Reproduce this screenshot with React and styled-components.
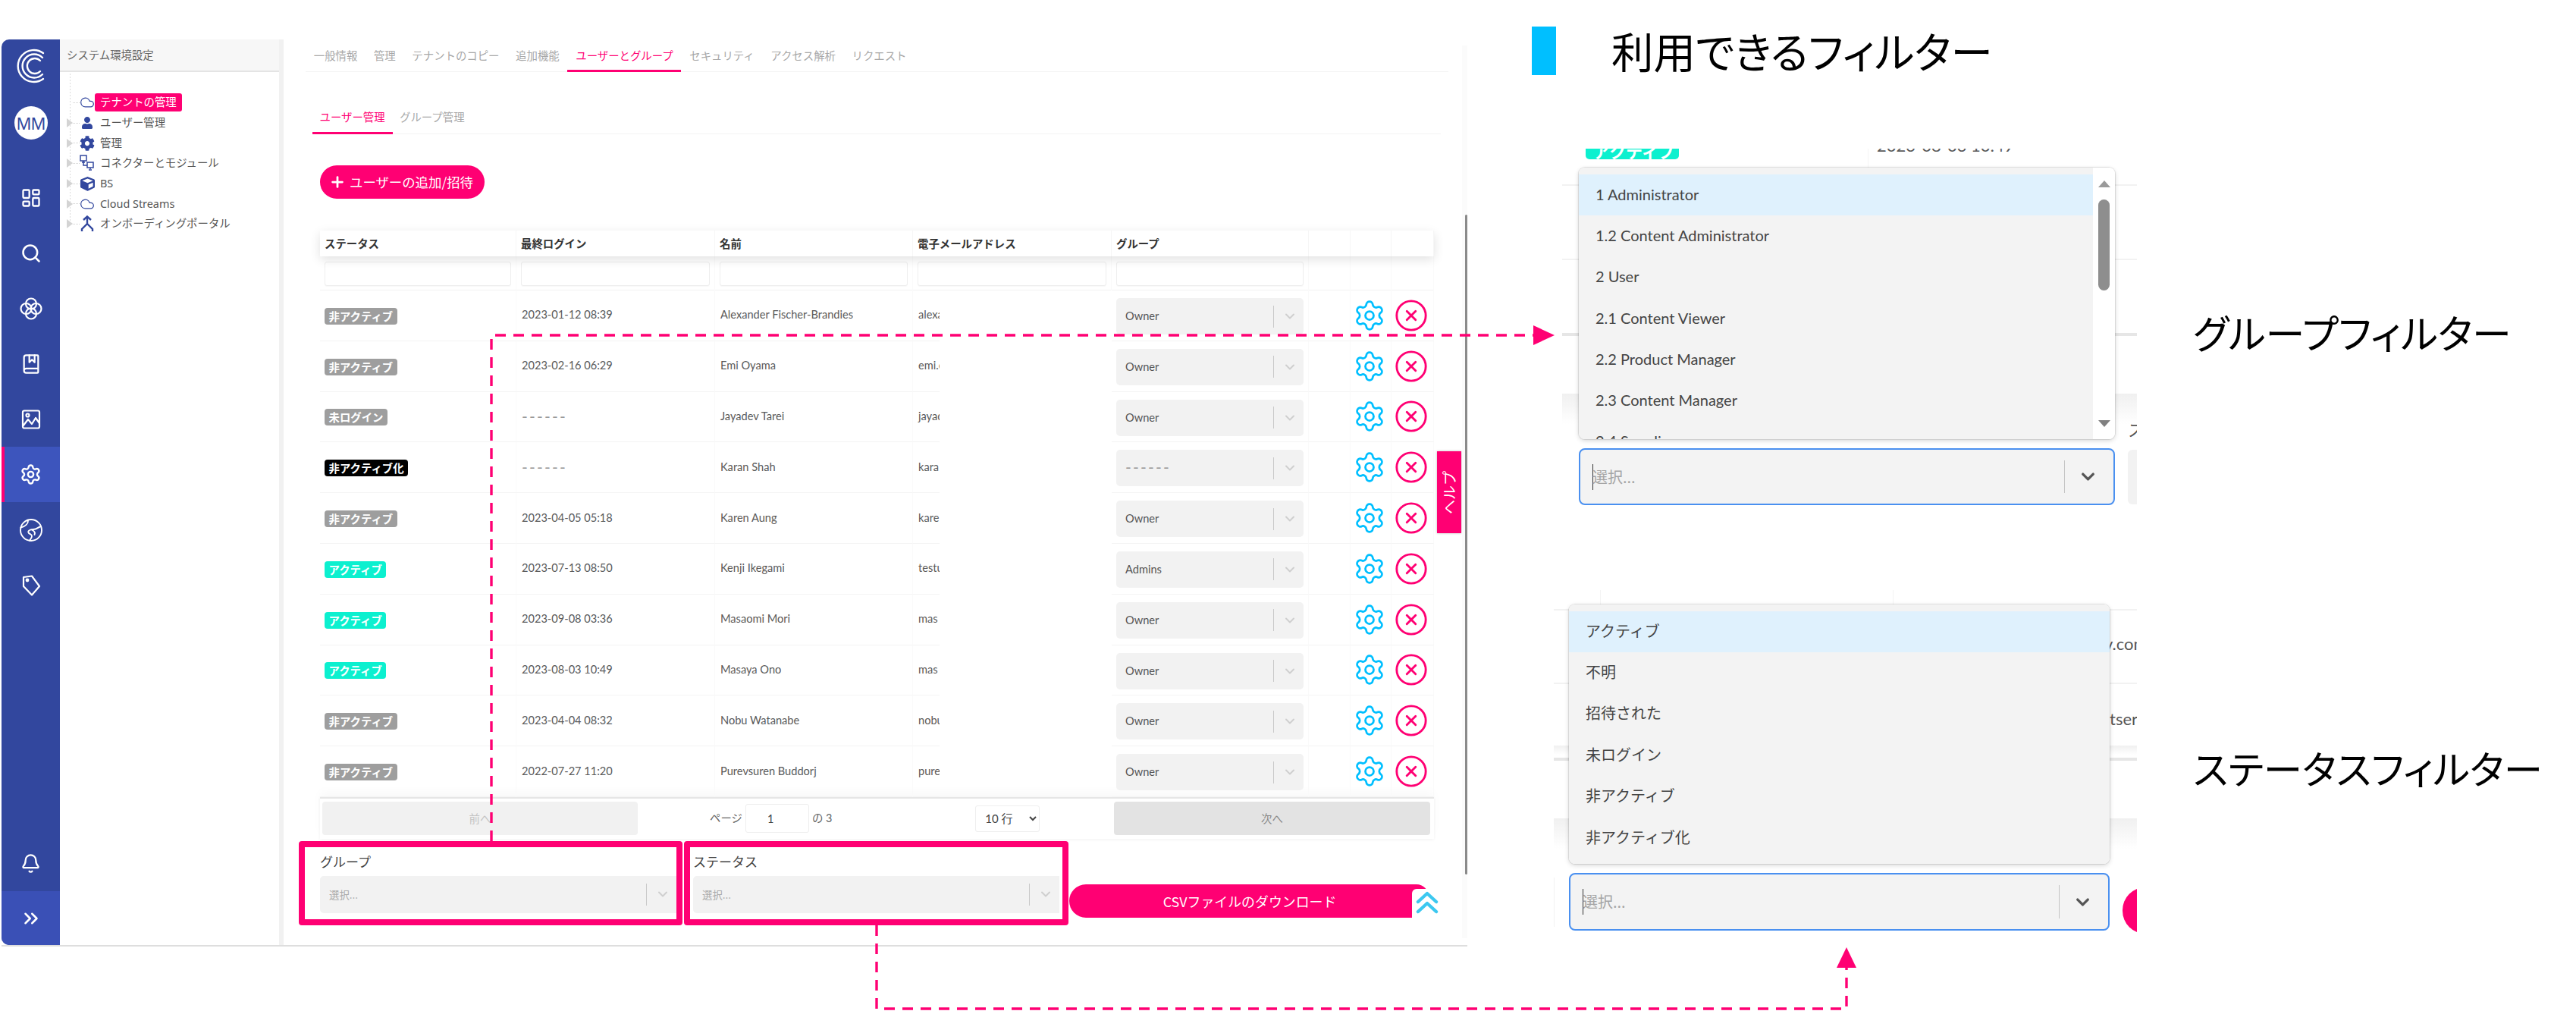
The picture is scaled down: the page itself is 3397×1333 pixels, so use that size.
import React from 'react';
import styled, { createGlobalStyle } from 'styled-components';
import { LayoutDashboard, Search, BookMarked, Settings, Bell, ChevronsRight, ChevronDown, CircleX, Cloud, Plus } from 'lucide-react';
import { FaUser, FaCog, FaCube } from 'react-icons/fa';

const PINK = '#ff0073';
const NAVY = '#32479e';
const CJK = '"Noto Sans CJK JP", sans-serif';
const UI = `Lato, ${CJK}`;

const Global = createGlobalStyle`
  html, body { margin: 0; padding: 0; background: #fff; overflow: hidden; }
  body { font-family: ${UI}; color: #444; }
  * { box-sizing: border-box; }
`;

const Page = styled.div`
  position: relative;
  width: 3397px;
  height: 1333px;
  display: flex;
  overflow: hidden;
  background: #fff;
`;

const AppWindow = styled.div`
  margin: 52px 0 0 2px;
  width: 1933px;
  height: 1196px;
  display: flex;
  border-bottom: 2px solid #dedede;
`;

const Nav = styled.nav`
  width: 77px;
  flex: none;
  background: ${NAVY};
  border-radius: 10px 0 0 10px;
  display: flex;
  flex-direction: column;
  align-items: stretch;
  overflow: hidden;
  color: #fff;
`;
const LogoBox = styled.div`
  height: 63px;
  padding-top: 12px;
  display: flex;
  justify-content: center;
`;
const Avatar = styled.div`
  width: 44px;
  height: 44px;
  margin: 25px auto 40px;
  border-radius: 50%;
  background: #fff;
  color: ${NAVY};
  font: 400 22px/44px "Noto Sans", sans-serif;
  letter-spacing: -1px;
  text-align: center;
`;
const NavItem = styled.div`
  height: 73px;
  display: flex;
  align-items: center;
  justify-content: center;
  background: ${p => (p.$active ? '#3d55bd' : 'transparent')};
  border-left: 4px solid ${p => (p.$active ? PINK : 'transparent')};
  padding-right: 4px;
`;
const NavSpacer = styled.div`flex: 1;`;
const ExpandItem = styled.div`
  height: 71px;
  background: #3a50b6;
  display: flex;
  align-items: center;
  justify-content: center;
`;

const Tree = styled.aside`
  width: 295px;
  flex: none;
  border-right: 6px solid #f1f1f1;
  display: flex;
  flex-direction: column;
`;
const TreeHead = styled.div`
  height: 43px;
  background: #f7f7f7;
  border-bottom: 2px solid #e4e4e4;
  padding-left: 9px;
  font: 400 14.4px/41px "Noto Sans", ${CJK};
  color: #666;
`;
const TreeBody = styled.div`
  padding: 27px 0 0 9px;
  background-image: repeating-linear-gradient(#dcdcdc 0 2px, transparent 2px 4px);
  background-repeat: no-repeat;
  background-position: 13px 2px;
  background-size: 1px 199px;
`;
const TreeRow = styled.div`
  height: 26.7px;
  display: flex;
  align-items: center;
  font: 400 14.4px/26px "Noto Sans", ${CJK};
  color: #555;
`;
const Caret = styled.span`
  width: 0;
  height: 0;
  flex: none;
  border-left: 8px solid ${p => (p.$hidden ? 'transparent' : '#d4d4d4')};
  border-top: 6px solid transparent;
  border-bottom: 6px solid transparent;
`;
const Dots = styled.span`
  width: 9px;
  flex: none;
  border-top: 1px dotted #d0d0d0;
`;
const TreeIcon = styled.span`
  width: 20px;
  height: 22px;
  flex: none;
  margin-right: ${p => (p.$tight ? 0 : 7)}px;
  display: flex;
  align-items: center;
  justify-content: center;
  color: ${NAVY};
`;
const TenantLabel = styled.span`
  height: 24px;
  padding: 0 7px;
  background: ${PINK};
  color: #fff;
  border-radius: 3px;
  line-height: 23px;
`;

const Main = styled.main`
  width: 1561px;
  flex: none;
  display: flex;
  flex-direction: column;
  position: relative;
`;
const Tabs = styled.div`
  margin-left: 29px;
  margin-right: 25px;
  height: 43px;
  display: flex;
  border-bottom: 1px solid #f3f3f3;
`;
const Tab = styled.div`
  height: 43px;
  padding: 0 10.8px;
  font: 400 14.4px/41px ${CJK};
  color: ${p => (p.$active ? PINK : '#a8a8a8')};
  border-bottom: 3px solid ${p => (p.$active ? PINK : 'transparent')};
`;
const SubTabs = styled.div`
  margin: 41px 35px 0 38px;
  height: 41px;
  display: flex;
  border-bottom: 1px solid #f3f3f3;
`;
const SubTab = styled.div`
  height: 41px;
  padding: 0 10px 0 9.5px;
  font: 400 14.4px/36px ${CJK};
  color: ${p => (p.$active ? PINK : '#a8a8a8')};
  border-bottom: 3px solid ${p => (p.$active ? PINK : 'transparent')};
`;
const AddButton = styled.button`
  margin: 41px 0 0 48px;
  width: 217px;
  height: 44px;
  border: 0;
  border-radius: 22px;
  background: ${PINK};
  color: #fff;
  padding: 0 0 0 12px;
  display: flex;
  align-items: center;
  gap: 5px;
  font: 400 17.4px/44px ${CJK};
  white-space: nowrap;
`;

const COLS = '259px 262px 261px 262px 260px 55px 54px 56px';
const Table = styled.div`
  margin: 42px 0 0 48px;
  width: 1469px;
`;
const HeadRow = styled.div`
  display: grid;
  grid-template-columns: ${COLS};
  height: 34px;
  background: #fff;
  box-shadow: 0 4px 14px rgba(0, 0, 0, 0.12);
  position: relative;
`;
const HeadCell = styled.div`
  padding-left: 6px;
  font: 700 14.4px/33px ${CJK};
  color: #333;
  border-right: 1px solid #f6f6f6;
`;
const FilterRow = styled.div`
  display: grid;
  grid-template-columns: ${COLS};
  height: 45px;
  border-bottom: 1px solid #f2f2f2;
`;
const FilterCell = styled.div`
  padding: 7px 6px 6px;
  border-right: 1px solid #fafafa;
`;
const FilterInput = styled.input`
  display: block;
  width: 100%;
  height: 32px;
  border: 1px solid #eee;
  border-radius: 3px;
  background: #fff;
  box-shadow: 0 1px 1px rgba(0, 0, 0, 0.03);
`;
const Row = styled.div`
  display: grid;
  grid-template-columns: ${COLS};
  height: 66.8px;
`;
const Cell = styled.div`
  padding: 0 0 1px 7px;
  display: flex;
  align-items: center;
  font: 400 14.6px/20px ${UI};
  color: #5a5a5a;
  border-right: 1px solid #fafafa;
  border-bottom: 1.5px solid #f4f4f4;
  white-space: nowrap;
  overflow: hidden;
`;
const DashText = styled.span`
  font: 400 21px/20px ${UI};
  letter-spacing: 2.2px;
  color: #9a9a9a;
`;
const StatusCell = styled(Cell)`
  padding: 2px 0 0 6px;
`;
const EmailCell = styled.div`
  display: block;
`;
const EmailClip = styled.div`
  width: 35px;
  height: 100%;
  padding: 0 0 1px 7px;
  display: flex;
  align-items: center;
  font: 400 14.6px/20px ${UI};
  color: #5a5a5a;
  overflow: hidden;
  white-space: nowrap;
  border-bottom: 1.5px solid #f4f4f4;
`;
const Badge = styled.span`
  height: 22px;
  padding: 0 5.5px;
  border-radius: 4px;
  font: 700 14.4px/21px ${CJK};
  color: #fff;
  background: ${p => ({ gray: '#9e9e9e', black: '#000', teal: '#0cf0cf' }[p.$tone])};
`;
const SelectCell = styled.div`
  padding: 10px 6px 7px;
  border-right: 1px solid #fafafa;
  border-bottom: 1.5px solid #f4f4f4;
`;
const GroupSelect = styled.div`
  height: 48px;
  background: #f2f2f2;
  border-radius: 5px;
  display: flex;
  align-items: center;
  padding-left: 12px;
  font: 400 14.6px/20px ${UI};
  color: #555;
`;
const SelectText = styled.span`flex: 1;`;
const SelectDivider = styled.span`
  width: 1px;
  height: 29px;
  background: #c9c9c9;
  margin-right: 11px;
`;
const SelectArrow = styled.span`
  width: 28px;
  display: flex;
  color: #cfcfcf;
`;
const ActionCell = styled.div`
  display: flex;
  align-items: center;
  justify-content: center;
  padding-right: 3px;
  color: ${p => p.$color};
  border-right: 1px solid #fafafa;
  border-bottom: 1.5px solid #f4f4f4;
`;
const Pagination = styled.div`
  height: 55px;
  border-top: 2px solid #e6e6e6;
  background: #fff;
  box-shadow: 0 -8px 12px rgba(0, 0, 0, 0.025), 0 1px 4px rgba(0, 0, 0, 0.06);
  display: grid;
  grid-template-columns: 424px 621px 424px;
  align-items: center;
`;
const PageButton = styled.div`
  height: 44px;
  margin: 0 5px 0 ${p => (p.$next ? 2 : 3)}px;
  background: ${p => (p.$next ? '#e3e3e3' : '#f1f1f1')};
  color: ${p => (p.$next ? '#888' : '#c4c4c4')};
  border-radius: 4px;
  text-align: center;
  font: 400 14.4px/44px ${CJK};
`;
const PageCenter = styled.div`
  display: flex;
  align-items: center;
  font: 400 14.4px/20px ${UI};
  color: #666;
  padding-left: 90px;
`;
const PageInput = styled.input`
  width: 84px;
  height: 38px;
  margin: 0 4px;
  padding: 0 0 0 28px;
  border: 1px solid #eee;
  border-radius: 3px;
  font: 400 14.4px/20px ${UI};
  color: #444;
  background: #fff;
`;
const RowSelect = styled.select`
  width: 85px;
  height: 35px;
  margin-left: 189px;
  padding-left: 8px;
  border: 1px solid #eee;
  border-radius: 3px;
  background: #fff;
  font: 400 15px ${UI};
  color: #444;
`;

const FilterBar = styled.div`
  margin: 3px 0 0 20px;
  display: flex;
  align-items: flex-start;
  gap: 2px;
  position: relative;
`;
const FilterBox = styled.div`
  width: ${p => p.$w}px;
  height: 111px;
  flex: none;
  border: 8.5px solid ${PINK};
  border-radius: 4px;
  padding: ${p => (p.$first ? '0 0 0 20px' : '0 4px 0 4px')};
  overflow: hidden;
`;
const FilterLabel = styled.div`
  height: 38px;
  font: 400 17px/38px ${CJK};
  color: #444;
`;
const DisabledSelect = styled.div`
  height: 49px;
  background: #f2f2f2;
  border-radius: 5px 0 0 5px;
  display: flex;
  align-items: center;
  padding-left: 12px;
  font: 400 13.4px/20px ${CJK};
  color: #aaa;
`;
const CsvButton = styled.button`
  position: relative;
  margin: 57px 0 0 -1px;
  width: 474px;
  height: 44px;
  border: 0;
  background: ${PINK};
  color: #fff;
  border-radius: 22px 16px 0 22px;
  padding: 0 0 0 2px;
  font: 400 17.9px/44px ${CJK};
`;
const ScrollTopChip = styled.span`
  position: absolute;
  right: -16px;
  top: 6px;
  width: 38px;
  height: 38px;
  background: #fff;
  border-radius: 6px 0 0 0;
  padding: 3px 0 0 5px;
  display: flex;
  align-items: flex-start;
`;

const HelpTab = styled.div`
  position: absolute;
  left: 1521px;
  top: 543px;
  width: 32px;
  height: 108px;
  background: ${PINK};
  color: #fff;
  writing-mode: vertical-rl;
  text-orientation: sideways;
  transform: rotate(180deg);
  display: flex;
  align-items: center;
  justify-content: center;
  font: 400 19px/32px ${CJK};
  box-shadow: 0 0 3px rgba(0, 0, 0, 0.25);
`;
const ScrollTrack = styled.div`
  position: absolute;
  left: 1554px;
  top: 8px;
  width: 7px;
  height: 1177px;
  background: #fbfbfb;
`;
const ScrollThumb = styled.div`
  position: absolute;
  right: 0;
  top: 223px;
  width: 3px;
  height: 870px;
  background: #8a8a8a;
  border-radius: 2px;
`;

const Side = styled.section`
  margin-left: 85px;
  flex: 1;
  display: flex;
  flex-direction: column;
`;
const TitleRow = styled.div`
  display: flex;
  align-items: center;
  margin-top: 35px;
  height: 64px;
`;
const Accent = styled.span`
  width: 32px;
  height: 64px;
  background: #00bfff;
`;
const Title = styled.h1`
  margin: -3px 0 0 73px;
  font: 400 55.5px/64px ${CJK};
  font-feature-settings: "palt";
  color: #000;
  white-space: nowrap;
`;
const FilterSection = styled.div`
  display: flex;
  margin: ${p => p.$top}px 0 0 ${p => p.$left}px;
`;
const Shot = styled.div`
  position: relative;
  width: ${p => p.$w}px;
  height: ${p => p.$h}px;
  flex: none;
  overflow: hidden;
  background: #fff;
`;
const Caption = styled.div`
  margin: ${p => p.$top}px 0 0 74px;
  font: 400 ${p => p.$size}px/60px ${CJK};
  font-feature-settings: "palt";
  color: #000;
  white-space: nowrap;
`;
const BackRule = styled.div`
  position: absolute;
  left: 0;
  right: 0;
  top: ${p => p.$top}px;
  height: ${p => (p.$heavy ? 4 : 1.5)}px;
  background: ${p => (p.$heavy ? '#e6e6e6' : '#f2f2f2')};
`;
const BackFade = styled.div`
  position: absolute;
  left: 0;
  right: 0;
  top: ${p => p.$top}px;
  height: ${p => p.$h}px;
  background: linear-gradient(#f0f0f0, #fff);
`;
const BackBadge = styled.div`
  position: absolute;
  left: 31px;
  top: -8px;
  width: 123px;
  height: 22px;
  background: #0cf0cf;
  border-radius: 5px;
  color: #fff;
  font: 700 22px/20px ${CJK};
  padding-left: 10px;
  overflow: hidden;
`;
const BackDate = styled.div`
  position: absolute;
  left: 415px;
  top: -14px;
  font: 400 22px/20px ${UI};
  color: #5a5a5a;
`;
const BackVLine = styled.div`
  position: absolute;
  left: ${p => p.$left}px;
  top: 0;
  width: 1px;
  height: ${p => p.$h}px;
  background: #f4f4f4;
`;
const BackText = styled.div`
  position: absolute;
  left: ${p => p.$left}px;
  top: ${p => p.$top}px;
  font: 400 22px/26px ${UI};
  color: #555;
  white-space: nowrap;
`;
const BackSelect = styled.div`
  position: absolute;
  left: 746px;
  top: 397px;
  width: 40px;
  height: 72px;
  background: #f2f2f2;
  border-radius: 6px;
`;
const BackPill = styled.div`
  position: absolute;
  left: 750px;
  top: 392px;
  width: 120px;
  height: 61px;
  background: ${PINK};
  border-radius: 30px;
`;
const BackEdge = styled.div`
  position: absolute;
  left: 0;
  top: 379px;
  width: 1px;
  height: 65px;
  background: #f2f2f2;
`;
const Menu = styled.div`
  position: absolute;
  left: ${p => p.$left}px;
  top: ${p => p.$top}px;
  width: ${p => p.$w}px;
  height: ${p => p.$h}px;
  display: flex;
  background: #fff;
  border-radius: 8px;
  overflow: hidden;
  box-shadow: 0 0 1px 1px rgba(0, 0, 0, 0.1), 0 2px 6px rgba(0, 0, 0, 0.16);
`;
const OptionList = styled.div`
  flex: 1;
  padding-top: 9px;
  background: #f3f3f3;
  overflow: hidden;
`;
const Option = styled.div`
  height: ${p => p.$h}px;
  padding: 0 0 3px 22px;
  display: flex;
  align-items: center;
  font: 400 20px/26px ${UI};
  color: #444;
  background: ${p => (p.$on ? '#dff1fd' : 'transparent')};
  white-space: nowrap;
`;
const MenuScroll = styled.div`
  width: 29px;
  flex: none;
  background: #fff;
  display: flex;
  flex-direction: column;
  align-items: center;
  padding-top: 17px;
`;
const ArrowUp = styled.span`
  border-left: 8px solid transparent;
  border-right: 8px solid transparent;
  border-bottom: 9px solid #9a9a9a;
`;
const ArrowDown = styled.span`
  border-left: 8px solid transparent;
  border-right: 8px solid transparent;
  border-top: 9px solid #808080;
  margin-top: 171px;
`;
const MenuThumb = styled.span`
  width: 15px;
  height: 120px;
  margin-top: 16px;
  border-radius: 8px;
  background: #8e8e8e;
`;
const FocusInput = styled.div`
  position: absolute;
  left: ${p => p.$left}px;
  top: ${p => p.$top}px;
  width: ${p => p.$w}px;
  height: ${p => p.$h}px;
  background: #f3f3f3;
  border: 2px solid #4a90f0;
  border-radius: 8px;
  display: flex;
  align-items: center;
  padding-left: 16px;
  font: 400 20px/26px ${CJK};
  color: #a5a5a5;
`;
const Caretline = styled.span`
  width: 1px;
  height: 34px;
  background: #333;
  margin-right: -1px;
`;
const InputDivider = styled.span`
  width: 1px;
  height: ${p => p.$h}px;
  background: #c4c4c4;
  margin-right: 17px;
`;
const InputArrow = styled.span`
  width: 47px;
  display: flex;
  color: #555;
`;

const Annotations = styled.svg`
  position: absolute;
  inset: 0;
  pointer-events: none;
`;

const Logo = () => (
  <svg width="40" height="46" viewBox="0 0 40 46" fill="none" stroke="#fff" strokeWidth="2.4" strokeLinecap="round">
    <path d="M36 6 A21 21 0 1 0 36 40" />
    <path d="M35 12 A15.5 15.5 0 1 0 35 34" />
    <path d="M32 16 A10 10 0 1 0 32 30" />
  </svg>
);
const Rings = () => (
  <svg width="32" height="32" viewBox="0 0 32 32" fill="none" stroke="#fff" strokeWidth="2.2">
    <circle cx="16" cy="9.5" r="7" />
    <circle cx="9.5" cy="16" r="7" />
    <circle cx="22.5" cy="16" r="7" />
    <circle cx="16" cy="22.5" r="7" />
  </svg>
);
const ImageIcon = () => (
  <svg width="26" height="26" viewBox="0 0 26 26" fill="none" stroke="#fff" strokeWidth="2.2" strokeLinejoin="round">
    <rect x="2" y="1.5" width="22" height="23" rx="2" />
    <circle cx="8.5" cy="7.5" r="2" />
    <path d="M2 22 L9 13 L14 19 L19 11 L24 18" />
  </svg>
);
const TagIcon = () => (
  <svg width="26" height="28" viewBox="0 0 26 28" fill="none" stroke="#fff" strokeWidth="2.2" strokeLinejoin="round">
    <path d="M3 3 L14 1.5 L24 15 L14 26.5 L3 15 Z" />
    <circle cx="8" cy="7" r="1.3" fill="#fff" />
  </svg>
);
const GlobeIcon = () => (
  <svg width="32" height="32" viewBox="0 0 32 32" fill="none" stroke="#fff" strokeWidth="1.9" strokeLinejoin="round" strokeLinecap="round">
    <circle cx="16" cy="16" r="14" />
    <path d="M12 2.6 C12.5 7 9 11 2.4 12.5" />
    <path d="M29 11 C25 12 24 15 19 15 C14 15 11 17 13 20 C15 22 17 21 17 24 C17 26 15 28 14 29.8" />
    <path d="M17 15.5 C20 17 22 19 20.5 22" />
  </svg>
);
const Connector = () => (
  <svg width="20" height="22" viewBox="0 0 20 22" fill="none" stroke={NAVY} strokeWidth="1.5">
    <rect x="1" y="1" width="8" height="7" />
    <path d="M5 8v2M3 10h4M5 10v4h5" />
    <rect x="10" y="10" width="8" height="7" />
    <path d="M14 17v2M12 20h4" />
  </svg>
);
const MergeIcon = () => (
  <svg width="20" height="22" viewBox="0 0 20 22" fill="none" stroke={NAVY} strokeWidth="2.4">
    <path d="M5 6 L10 1.5 L15 6" />
    <path d="M10 2 V11 L3 18 V21 M10 11 L17 18 V21" />
  </svg>
);
const DoubleUp = () => (
  <svg width="30" height="30" viewBox="0 0 30 30" fill="none" stroke="#3cc8f0" strokeWidth="4.4" strokeLinecap="round" strokeLinejoin="round">
    <path d="M3 14 L15 3 L27 14" />
    <path d="M3 27 L15 16 L27 27" />
  </svg>
);

const users = [
  ['gray', '非アクティブ', '2023-01-12 08:39', 'Alexander Fischer-Brandies', 'alexa', 'Owner'],
  ['gray', '非アクティブ', '2023-02-16 06:29', 'Emi Oyama', 'emi.o', 'Owner'],
  ['gray', '未ログイン', '------', 'Jayadev Tarei', 'jayad', 'Owner'],
  ['black', '非アクティブ化', '------', 'Karan Shah', 'kara', '------'],
  ['gray', '非アクティブ', '2023-04-05 05:18', 'Karen Aung', 'kare', 'Owner'],
  ['teal', 'アクティブ', '2023-07-13 08:50', 'Kenji Ikegami', 'testu', 'Admins'],
  ['teal', 'アクティブ', '2023-09-08 03:36', 'Masaomi Mori', 'mas', 'Owner'],
  ['teal', 'アクティブ', '2023-08-03 10:49', 'Masaya Ono', 'mas', 'Owner'],
  ['gray', '非アクティブ', '2023-04-04 08:32', 'Nobu Watanabe', 'nobu', 'Owner'],
  ['gray', '非アクティブ', '2022-07-27 11:20', 'Purevsuren Buddorj', 'pure', 'Owner'],
];

const groupOptions = ['1 Administrator', '1.2 Content Administrator', '2 User', '2.1 Content Viewer', '2.2 Product Manager', '2.3 Content Manager', '2.4 Supplier'];
const statusOptions = ['アクティブ', '不明', '招待された', '未ログイン', '非アクティブ', '非アクティブ化'];
const heads = ['ステータス', '最終ログイン', '名前', '電子メールアドレス', 'グループ', '', '', ''];
const tabs = ['一般情報', '管理', 'テナントのコピー', '追加機能', 'ユーザーとグループ', 'セキュリティ', 'アクセス解析', 'リクエスト'];
const showDashes = v => (v === '------' ? <DashText>{v}</DashText> : v);

export default function App() {
  return (
    <Page>
      <Global />
      <AppWindow>
        <Nav>
          <LogoBox><Logo /></LogoBox>
          <Avatar>MM</Avatar>
          <NavItem><LayoutDashboard size={28} strokeWidth={2} /></NavItem>
          <NavItem><Search size={28} strokeWidth={2.2} /></NavItem>
          <NavItem><Rings /></NavItem>
          <NavItem><BookMarked size={28} strokeWidth={1.9} /></NavItem>
          <NavItem><ImageIcon /></NavItem>
          <NavItem $active><Settings size={29} strokeWidth={2} /></NavItem>
          <NavItem><GlobeIcon /></NavItem>
          <NavItem><TagIcon /></NavItem>
          <NavSpacer />
          <NavItem><Bell size={27} strokeWidth={2} /></NavItem>
          <ExpandItem><ChevronsRight size={30} strokeWidth={2} /></ExpandItem>
        </Nav>
        <Tree>
          <TreeHead>システム環境設定</TreeHead>
          <TreeBody>
            <TreeRow>
              <Caret $hidden /><Dots />
              <TreeIcon $tight><Cloud size={20} strokeWidth={1.5} /></TreeIcon>
              <TenantLabel>テナントの管理</TenantLabel>
            </TreeRow>
            <TreeRow><Caret /><Dots /><TreeIcon><FaUser size={16} /></TreeIcon>ユーザー管理</TreeRow>
            <TreeRow><Caret /><Dots /><TreeIcon><FaCog size={20} /></TreeIcon>管理</TreeRow>
            <TreeRow><Caret /><Dots /><TreeIcon><Connector /></TreeIcon>コネクターとモジュール</TreeRow>
            <TreeRow><Caret /><Dots /><TreeIcon><FaCube size={19} /></TreeIcon>BS</TreeRow>
            <TreeRow><Caret /><Dots /><TreeIcon><Cloud size={20} strokeWidth={1.5} /></TreeIcon>Cloud Streams</TreeRow>
            <TreeRow><Caret /><Dots /><TreeIcon><MergeIcon /></TreeIcon>オンボーディングポータル</TreeRow>
          </TreeBody>
        </Tree>
        <Main>
          <Tabs>
            {tabs.map((t, i) => <Tab key={t} $active={i === 4}>{t}</Tab>)}
          </Tabs>
          <SubTabs>
            <SubTab $active>ユーザー管理</SubTab>
            <SubTab>グループ管理</SubTab>
          </SubTabs>
          <AddButton><Plus size={22} strokeWidth={3} />ユーザーの追加/招待</AddButton>
          <Table>
            <HeadRow>{heads.map((h, i) => <HeadCell key={i}>{h}</HeadCell>)}</HeadRow>
            <FilterRow>
              {[0, 1, 2, 3, 4].map(i => <FilterCell key={i}><FilterInput /></FilterCell>)}
              <FilterCell /><FilterCell /><FilterCell />
            </FilterRow>
            {users.map(([tone, status, login, name, email, group]) => (
              <Row key={name}>
                <StatusCell><Badge $tone={tone}>{status}</Badge></StatusCell>
                <Cell>{showDashes(login)}</Cell>
                <Cell>{name}</Cell>
                <EmailCell><EmailClip>{email}</EmailClip></EmailCell>
                <SelectCell>
                  <GroupSelect>
                    <SelectText>{showDashes(group)}</SelectText>
                    <SelectDivider />
                    <SelectArrow><ChevronDown size={20} strokeWidth={2.4} /></SelectArrow>
                  </GroupSelect>
                </SelectCell>
                <ActionCell />
                <ActionCell $color="#00bfff"><Settings size={44} strokeWidth={1.5} /></ActionCell>
                <ActionCell $color={PINK}><CircleX size={46} strokeWidth={1.5} /></ActionCell>
              </Row>
            ))}
            <Pagination>
              <PageButton>前へ</PageButton>
              <PageCenter>
                ページ
                <PageInput defaultValue="1" />
                の 3
                <RowSelect defaultValue="10"><option value="10">10 行</option></RowSelect>
              </PageCenter>
              <PageButton $next>次へ</PageButton>
            </Pagination>
          </Table>
          <FilterBar>
            <FilterBox $w={506} $first>
              <FilterLabel>グループ</FilterLabel>
              <DisabledSelect>
                <SelectText>選択...</SelectText>
                <SelectDivider />
                <SelectArrow><ChevronDown size={20} strokeWidth={2.4} /></SelectArrow>
              </DisabledSelect>
            </FilterBox>
            <FilterBox $w={507}>
              <FilterLabel>ステータス</FilterLabel>
              <DisabledSelect>
                <SelectText>選択...</SelectText>
                <SelectDivider />
                <SelectArrow><ChevronDown size={20} strokeWidth={2.4} /></SelectArrow>
              </DisabledSelect>
            </FilterBox>
            <CsvButton>
              CSVファイルのダウンロード
              <ScrollTopChip><DoubleUp /></ScrollTopChip>
            </CsvButton>
          </FilterBar>
          <HelpTab>ヘルプ</HelpTab>
          <ScrollTrack><ScrollThumb /></ScrollTrack>
        </Main>
      </AppWindow>
      <Side>
        <TitleRow><Accent /><Title>利用できるフィルター</Title></TitleRow>
        <FilterSection $top={97} $left={40}>
          <Shot $w={758} $h={474}>
            <BackBadge>アクティブ</BackBadge>
            <BackDate>2023-08-03 10:49</BackDate>
            <BackVLine $left={403} $h={28} />
            <BackRule $top={47} />
            <BackRule $top={145} />
            <BackRule $top={243} $heavy />
            <BackFade $top={323} $h={40} />
            <BackText $left={746} $top={358}>ス</BackText>
            <BackSelect />
            <Menu $left={22} $top={25} $w={707} $h={358}>
              <OptionList>
                {groupOptions.map((o, i) => <Option key={o} $h={54.3} $on={i === 0}>{o}</Option>)}
              </OptionList>
              <MenuScroll>
                <ArrowUp /><MenuThumb /><ArrowDown />
              </MenuScroll>
            </Menu>
            <FocusInput $left={22} $top={395} $w={707} $h={75}>
              <Caretline />
              <SelectText>選択...</SelectText>
              <InputDivider $h={43} />
              <InputArrow><ChevronDown size={27} strokeWidth={3} /></InputArrow>
            </FocusInput>
          </Shot>
          <Caption $top={212} $size={52}>グループフィルター</Caption>
        </FilterSection>
        <FilterSection $top={108} $left={29}>
          <Shot $w={769} $h={453}>
            <BackVLine $left={61} $h={20} />
            <BackVLine $left={447} $h={20} />
            <BackRule $top={25} />
            <BackRule $top={122} />
            <BackFade $top={205} $h={12} />
            <BackRule $top={221} $heavy />
            <BackFade $top={301} $h={40} />
            <BackText $left={726} $top={58}>v.com</BackText>
            <BackText $left={733} $top={157}>tserv</BackText>
            <BackEdge />
            <BackPill />
            <Menu $left={20} $top={19} $w={713} $h={342}>
              <OptionList>
                {statusOptions.map((o, i) => <Option key={o} $h={54.4} $on={i === 0}>{o}</Option>)}
              </OptionList>
            </Menu>
            <FocusInput $left={20} $top={373} $w={713} $h={76}>
              <Caretline />
              <SelectText>選択...</SelectText>
              <InputDivider $h={44} />
              <InputArrow><ChevronDown size={27} strokeWidth={3} /></InputArrow>
            </FocusInput>
          </Shot>
          <Caption $top={204} $size={51.5}>ステータスフィルター</Caption>
        </FilterSection>
      </Side>
      <Annotations width="3397" height="1333" viewBox="0 0 3397 1333">
        <g fill="none" stroke={PINK} strokeWidth="3.4" strokeDasharray="14 10">
          <path d="M648 1109 V442 H2024" />
          <path d="M1156 1220 V1330 H2435 V1276" />
        </g>
        <path d="M2022 429 L2050 442 L2022 455 Z" fill={PINK} />
        <path d="M2435 1249 L2448 1276 L2422 1276 Z" fill={PINK} />
      </Annotations>
    </Page>
  );
}
